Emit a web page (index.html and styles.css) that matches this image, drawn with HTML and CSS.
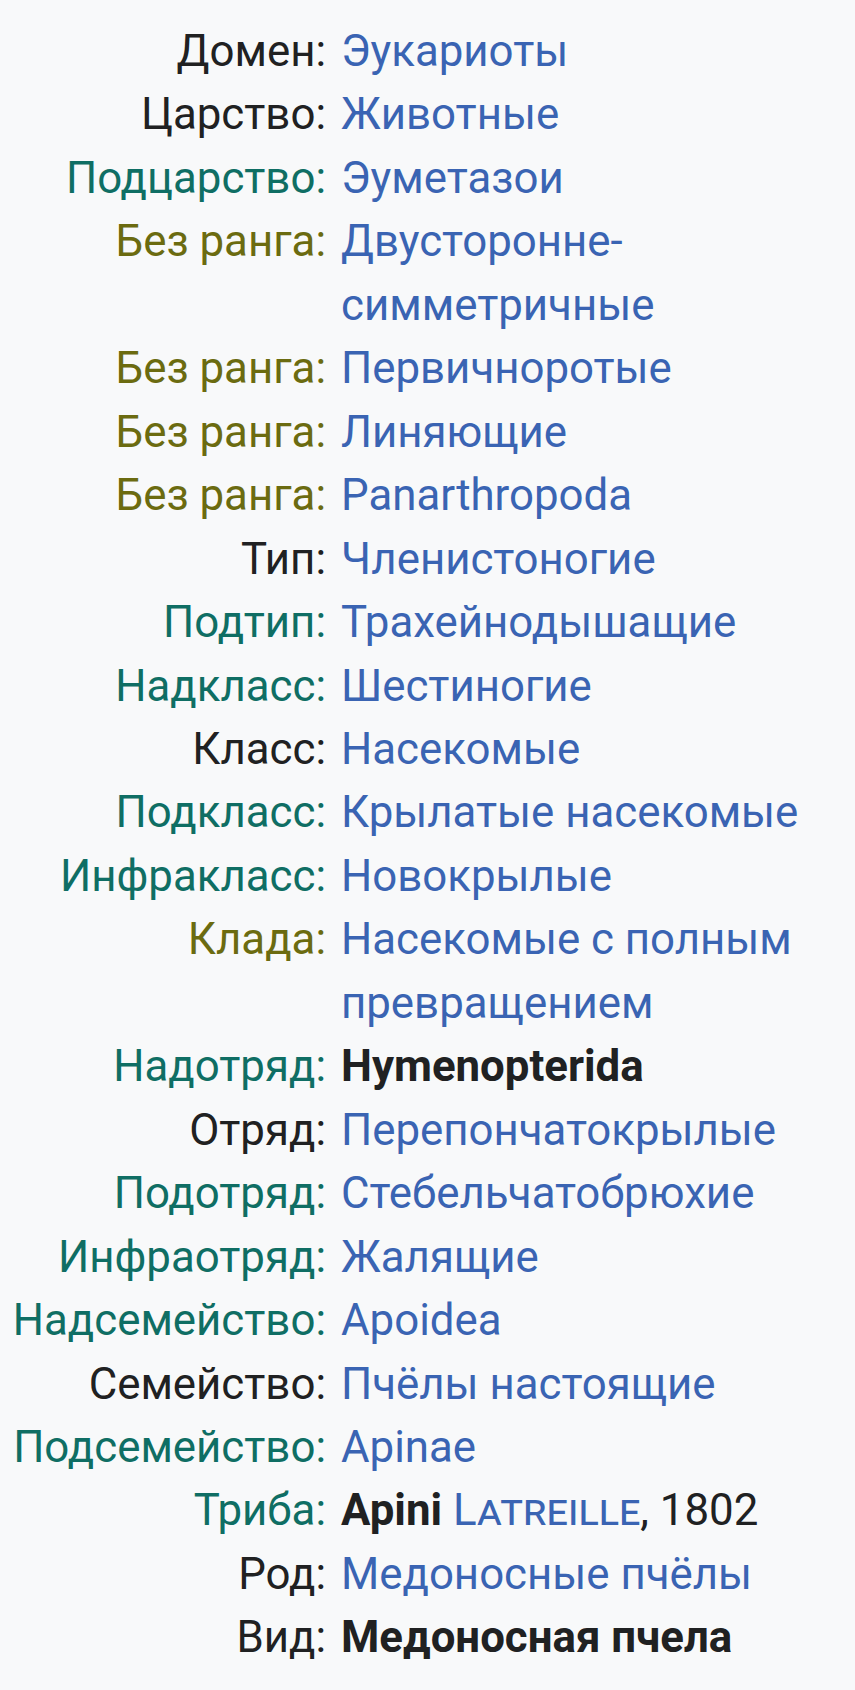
FILE: index.html
```html
<!DOCTYPE html>
<html lang="ru">
<head>
<meta charset="utf-8">
<link rel="stylesheet" href="styles.css">
</head>
<body>
<div class="taxo">
  <div class="lbl">Домен:</div><div class="val"><a>Эукариоты</a></div>
  <div class="lbl">Царство:</div><div class="val"><a>Животные</a></div>
  <div class="lbl teal">Подцарство:</div><div class="val"><a>Эуметазои</a></div>
  <div class="lbl olive">Без ранга:</div><div class="val"><a>Двусторонне-симметричные</a></div>
  <div class="lbl olive">Без ранга:</div><div class="val"><a>Первичноротые</a></div>
  <div class="lbl olive">Без ранга:</div><div class="val"><a>Линяющие</a></div>
  <div class="lbl olive">Без ранга:</div><div class="val"><a>Panarthropoda</a></div>
  <div class="lbl">Тип:</div><div class="val"><a>Членистоногие</a></div>
  <div class="lbl teal">Подтип:</div><div class="val"><a>Трахейнодышащие</a></div>
  <div class="lbl teal">Надкласс:</div><div class="val"><a>Шестиногие</a></div>
  <div class="lbl">Класс:</div><div class="val"><a>Насекомые</a></div>
  <div class="lbl teal">Подкласс:</div><div class="val"><a>Крылатые насекомые</a></div>
  <div class="lbl teal">Инфракласс:</div><div class="val"><a>Новокрылые</a></div>
  <div class="lbl olive">Клада:</div><div class="val"><a>Насекомые с полным превращением</a></div>
  <div class="lbl teal">Надотряд:</div><div class="val"><b>Hymenopterida</b></div>
  <div class="lbl">Отряд:</div><div class="val"><a>Перепончатокрылые</a></div>
  <div class="lbl teal">Подотряд:</div><div class="val"><a>Стебельчатобрюхие</a></div>
  <div class="lbl teal">Инфраотряд:</div><div class="val"><a>Жалящие</a></div>
  <div class="lbl teal">Надсемейство:</div><div class="val"><a>Apoidea</a></div>
  <div class="lbl">Семейство:</div><div class="val"><a>Пчёлы настоящие</a></div>
  <div class="lbl teal">Подсемейство:</div><div class="val"><a>Apinae</a></div>
  <div class="lbl teal">Триба:</div><div class="val"><b>Apini</b> <a class="sc">Latreille</a>, 1802</div>
  <div class="lbl">Род:</div><div class="val"><a>Медоносные пчёлы</a></div>
  <div class="lbl">Вид:</div><div class="val"><b>Медоносная пчела</b></div>
</div>
</body>
</html>
```
FILE: styles.css
```css
html, body {
  margin: 0;
  padding: 0;
  background: #f8f9fa;
}
body {
  font-family: Roboto, "Noto Sans", sans-serif;
  font-size: 43.8px;
  line-height: 63.45px;
  color: #202122;
}
.taxo {
  display: grid;
  grid-template-columns: 326px 470px;
  column-gap: 15px;
  padding-top: 20px;
}
.lbl {
  text-align: right;
  white-space: nowrap;
}
.teal { color: #0f6e64; }
.olive { color: #6b6b10; }
.val a {
  color: #3a64b3;
  text-decoration: none;
}
.val b {
  font-weight: 700;
  color: #202122;
}
.sc {
  font-variant: small-caps;
}
```
